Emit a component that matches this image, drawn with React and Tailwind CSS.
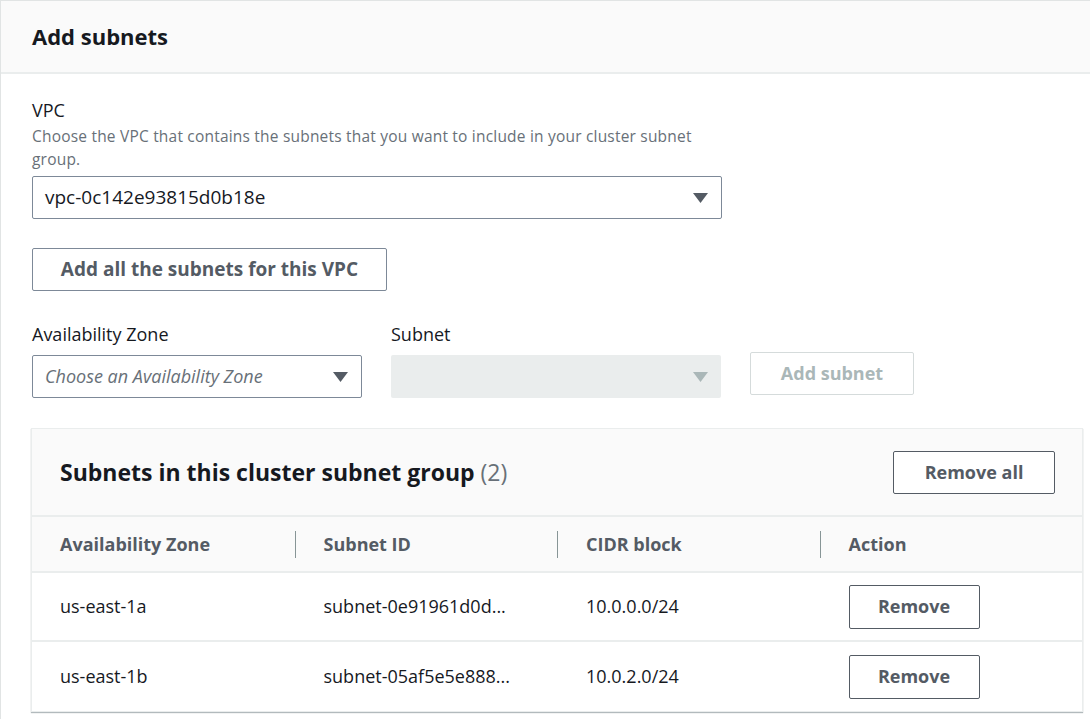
import React from 'react';

const Caret = ({ className }) => (
  <svg width="15" height="10" viewBox="0 0 15 10" className={className}>
    <path d="M0 0h15L7.5 10z" fill="currentColor" />
  </svg>
);

const rows = [
  { az: 'us-east-1a', id: 'subnet-0e91961d0d...', cidr: '10.0.0.0/24' },
  { az: 'us-east-1b', id: 'subnet-05af5e5e888...', cidr: '10.0.2.0/24' },
];

export default function App() {
  return (
    <div className="min-h-[719px] bg-white text-[#16191f]" style={{ fontFamily: '"Open Sans", "Noto Sans", Arial, sans-serif' }}>
      <div className="border-l border-t border-[#e1e4e4] min-h-[719px]">
        <div className="h-[73px] bg-[#fafafa] border-b-2 border-[#eaeded] px-[31px] flex items-center">
          <h2 className="text-[22px] font-bold">Add subnets</h2>
        </div>

        <div className="px-[31px] pt-[25px]">
          <div className="text-[18px] leading-[22px]">VPC</div>
          <p className="mt-[4px] max-w-[690px] text-[15.5px] tracking-[0.2px] leading-[23px] text-[#687078]">
            Choose the VPC that contains the subnets that you want to include in your cluster subnet group.
          </p>
          <div className="mt-[5px] w-[690px] h-[43px] border border-[#7d8998] rounded-[2px] px-3 flex items-center justify-between">
            <span className="text-[19px]">vpc-0c142e93815d0b18e</span>
            <Caret className="text-[#545b64] mr-[1px]" />
          </div>

          <button className="mt-[29px] w-[355px] h-[43px] border border-[#7d8998] rounded-[2px] text-[19px] font-bold text-[#545b64] bg-white">
            Add all the subnets for this VPC
          </button>

          <div className="mt-[32px] flex items-end gap-[29px]">
            <div className="w-[330px]">
              <div className="text-[18px] leading-[22px]">Availability Zone</div>
              <div className="mt-[10px] h-[43px] border border-[#7d8998] rounded-[2px] px-3 flex items-center justify-between">
                <span className="text-[18px] italic text-[#687078]">Choose an Availability Zone</span>
                <Caret className="text-[#545b64] mr-[1px]" />
              </div>
            </div>
            <div className="w-[330px]">
              <div className="text-[18px] leading-[22px]">Subnet</div>
              <div className="mt-[10px] h-[43px] bg-[#eaeded] rounded-[2px] px-3 flex items-center justify-end">
                <Caret className="text-[#aab7b8] mr-[1px]" />
              </div>
            </div>
            <button className="mb-[3px] w-[164px] h-[43px] border border-[#d5dbdb] rounded-[2px] text-[18px] font-bold text-[#aab7b8] bg-white">
              Add subnet
            </button>
          </div>

          <div className="mt-[30px] -ml-px w-[1052px] border border-[#eaeded] shadow-[0_1px_1px_0_rgba(0,28,36,0.3)]">
            <div className="h-[88px] bg-[#fafafa] border-b-2 border-[#eaeded] pl-[28px] pr-[27px] flex items-center justify-between">
              <h3 className="text-[23px] font-bold">
                Subnets in this cluster subnet group <span className="font-normal text-[#687078]">(2)</span>
              </h3>
              <button className="w-[162px] h-[43px] border border-[#545b64] rounded-[2px] text-[18px] font-bold text-[#545b64] bg-white">
                Remove all
              </button>
            </div>
            <div className="h-[56px] bg-[#fafafa] border-b-2 border-[#eaeded] grid grid-cols-4">
              {['Availability Zone', 'Subnet ID', 'CIDR block', 'Action'].map((h, i) => (
                <div key={h} className="flex items-center">
                  {i > 0 && <div className="w-px h-[27px] bg-[#879596]" />}
                  <span className="pl-[28px] text-[18px] font-bold text-[#545b64]">{h}</span>
                </div>
              ))}
            </div>
            {rows.map((r, idx) => (
              <div key={r.az} className={`h-[69px] grid grid-cols-4 items-center text-[18px] ${idx === 0 ? 'border-b-2 border-[#eaeded]' : ''}`}>
                <div className="pl-[28px]">{r.az}</div>
                <div className="pl-[29px]">{r.id}</div>
                <div className="pl-[29px]">{r.cidr}</div>
                <div className="pl-[29px]">
                  <button className="w-[131px] h-[44px] border border-[#545b64] rounded-[2px] font-bold text-[#545b64] bg-white">
                    Remove
                  </button>
                </div>
              </div>
            ))}
          </div>
        </div>
      </div>
    </div>
  );
}
